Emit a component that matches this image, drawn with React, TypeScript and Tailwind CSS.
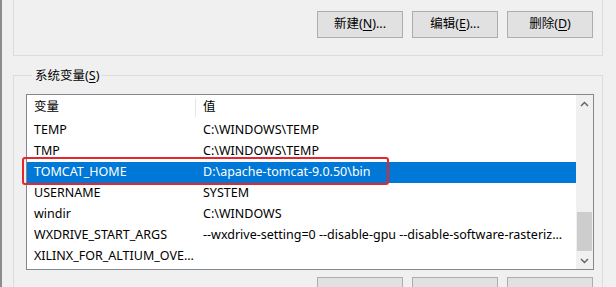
import React from 'react';

const rows = [
  { name: 'TEMP', value: 'C:\\WINDOWS\\TEMP' },
  { name: 'TMP', value: 'C:\\WINDOWS\\TEMP' },
  { name: 'TOMCAT_HOME', value: 'D:\\apache-tomcat-9.0.50\\bin', selected: true },
  { name: 'USERNAME', value: 'SYSTEM' },
  { name: 'windir', value: 'C:\\WINDOWS' },
  { name: 'WXDRIVE_START_ARGS', value: '--wxdrive-setting=0 --disable-gpu --disable-software-rasteriz...' },
  { name: 'XILINX_FOR_ALTIUM_OVE...', value: '' },
];

const Btn: React.FC<{ label: string; hot: string; rest: string }> = ({ label, hot, rest }) => (
  <button className="w-[86px] h-[27px] shrink-0 bg-[#e1e1e1] border border-[#adadad] text-[12.5px] text-black flex items-center justify-center">
    {label}(<span className="underline underline-offset-2">{hot}</span>){rest}
  </button>
);

const Chevron: React.FC<{ down?: boolean }> = ({ down }) => (
  <svg width="9" height="6" viewBox="0 0 9 6" className={down ? 'rotate-180' : ''}>
    <path d="M1 5 L4.5 1.5 L8 5" fill="none" stroke="#606060" strokeWidth="1.4" />
  </svg>
);

const App: React.FC = () => {
  return (
    <div
      className="relative w-[616px] h-[287px] overflow-hidden bg-[#f0f0f0] border-l-2 border-[#8c8c8c]"
      style={{ fontFamily: '"Noto Sans", "Noto Sans CJK SC", sans-serif' }}
    >
      {/* user vars group (bottom part only) */}
      <div className="ml-[11px] w-[590px] h-[66px] mt-[-10px] border-x border-b border-[#dcdcdc] flex justify-end items-start gap-[9px] pt-[21px] pr-[9px]">
        <Btn label="新建" hot="N" rest="..." />
        <Btn label="编辑" hot="E" rest="..." />
        <Btn label="删除" hot="D" rest="" />
      </div>

      {/* system vars group */}
      <fieldset className="ml-[11px] w-[590px] mt-[11px] border border-[#dcdcdc] pl-[12px] pr-[8px]">
        <legend className="ml-[6px] px-[3px] text-[12.5px] leading-[17px] text-black">
          系统变量(<span className="underline underline-offset-2">S</span>)
        </legend>

        <div className="mt-[10px] h-[176px] border border-[#828790] bg-white flex">
          <div className="flex-1 flex flex-col text-[12.5px] text-black">
            <div className="h-[25px] flex items-center">
              <div className="w-[168px] pl-[7px]">变量</div>
              <div className="w-px h-[19px] bg-[#e5e5e5]" />
              <div className="pl-[7px]">值</div>
            </div>
            {rows.map((r) => (
              <div
                key={r.name}
                className={`h-[21px] flex items-center whitespace-nowrap ${r.selected ? 'bg-[#0078d7] text-white' : ''}`}
              >
                <div className="w-[169px] pl-[7px] overflow-hidden">{r.name}</div>
                <div className="flex-1 pl-[7px] overflow-hidden">{r.value}</div>
              </div>
            ))}
          </div>
          <div className="w-[17px] bg-[#f0f0f0] flex flex-col items-center">
            <div className="h-[17px] flex items-center justify-center"><Chevron /></div>
            <div className="flex-1 w-full flex flex-col pt-[100px]">
              <div className="h-[39px] mx-[1px] bg-[#cdcdcd]" />
            </div>
            <div className="h-[17px] flex items-center justify-center"><Chevron down /></div>
          </div>
        </div>

        <div className="mt-[7px] flex justify-end gap-[9px] pr-[1px]">
          <div className="w-[86px] h-[27px] bg-[#e1e1e1] border border-[#adadad]" />
          <div className="w-[86px] h-[27px] bg-[#e1e1e1] border border-[#adadad]" />
          <div className="w-[86px] h-[27px] bg-[#e1e1e1] border border-[#adadad]" />
        </div>
      </fieldset>

      {/* red annotation box */}
      <div className="absolute left-[20px] top-[157px] w-[367px] h-[28px] border-2 border-[#e5262b] rounded-[3px]" />
    </div>
  );
};

export default App;
